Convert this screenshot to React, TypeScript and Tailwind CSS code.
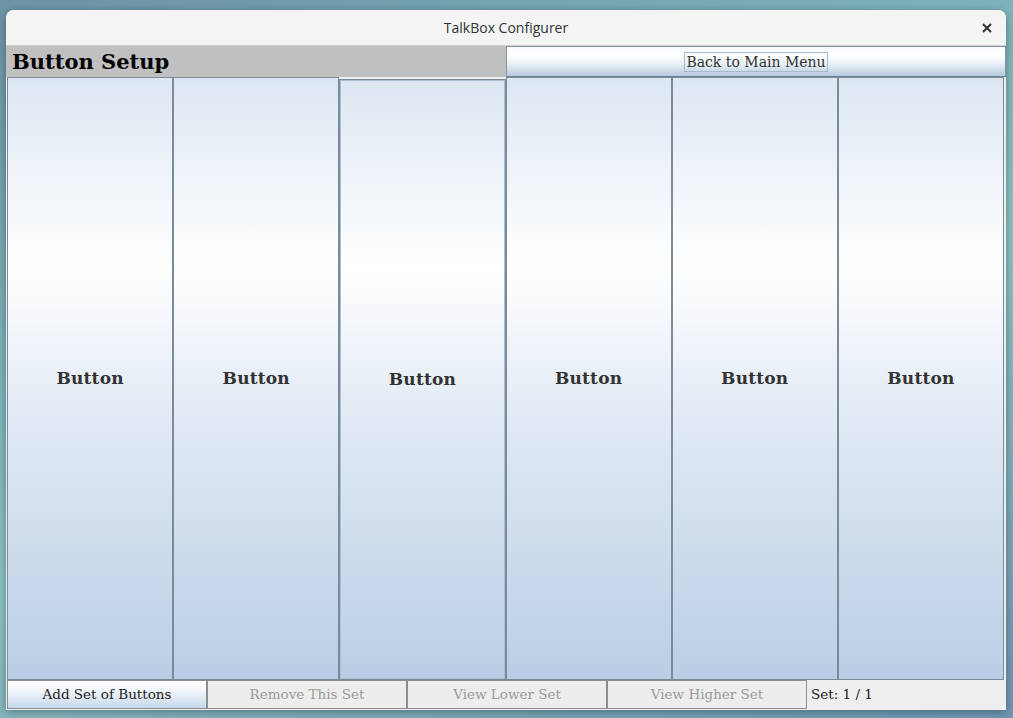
import { X } from 'lucide-react'

const serif = "font-['DejaVu_Serif','Liberation_Serif',serif]"

function BigButton({ focused }: { focused?: boolean }) {
  return (
    <div
      className={`flex flex-1 items-center justify-center border border-[#7b8b9a] bg-[linear-gradient(to_bottom,#dde7f2_0%,#fbfdfe_28%,#ffffff_31%,#e3ebf5_55%,#b9cee5_100%)] ${
        focused ? 'mt-[2px] shadow-[inset_0_0_0_1px_#a9bfd6]' : ''
      }`}
    >
      <span className={`${serif} text-[17px] font-bold tracking-[0.2px] text-[#333]`}>Button</span>
    </div>
  )
}

function BottomButton({ label, enabled }: { label: string; enabled?: boolean }) {
  return (
    <div
      className={`flex w-[200px] items-center justify-center border border-[#8e8e8e] ${
        enabled
          ? 'bg-[linear-gradient(to_bottom,#ffffff_0%,#f2f6fb_35%,#c5d7ea_100%)] text-[#222]'
          : 'bg-[#ededed] text-[#9b9b9b]'
      }`}
    >
      <span className={`${serif} text-[13.5px]`}>{label}</span>
    </div>
  )
}

export default function App() {
  return (
    <div className="h-[718px] w-[1013px] overflow-hidden bg-[linear-gradient(160deg,#6c93a6_0%,#7fb4bb_35%,#8cc2c4_55%,#6f97b3_100%)] pl-[6px] pt-[10px]">
      <div className="flex h-[700px] w-[1000px] flex-col overflow-hidden rounded-t-[8px] bg-[#eeeeee] shadow-[0_2px_8px_rgba(0,0,0,0.35)]">
        {/* title bar */}
        <div className="relative flex h-[36px] shrink-0 items-center justify-center border-b border-[#cfcfcf] bg-[#f4f4f4]">
          <span className="font-['Open_Sans','Noto_Sans',sans-serif] text-[14px] text-[#2e3436]">TalkBox Configurer</span>
          <X className="absolute right-[12px] top-[11px] h-[14px] w-[14px] text-[#2e3436]" strokeWidth={3.2} />
        </div>

        {/* header row */}
        <div className="flex h-[31px] shrink-0">
          <div className="flex w-[500px] items-end bg-[#c0c0c0] pb-[1px] pl-[6px]">
            <span className={`${serif} text-[21px] font-bold leading-[28px] text-black`}>Button Setup</span>
          </div>
          <div className="flex flex-1 items-center justify-center border border-[#8595a6] border-b-[#6f8193] bg-[linear-gradient(to_bottom,#f7fafd_0%,#ffffff_30%,#e6eef6_60%,#b5cade_100%)]">
            <span className={`${serif} border border-[#a7b9cd] px-[1px] text-[14px] leading-[18px] text-[#333]`}>Back to Main Menu</span>
          </div>
        </div>

        {/* buttons */}
        <div className="flex min-h-0 flex-1 pl-[1px] pr-[2px]">
          <BigButton />
          <BigButton />
          <BigButton focused />
          <BigButton />
          <BigButton />
          <BigButton />
        </div>

        {/* bottom row */}
        <div className="flex h-[30px] shrink-0 pl-[1px] pb-[1px]">
          <BottomButton label="Add Set of Buttons" enabled />
          <BottomButton label="Remove This Set" />
          <BottomButton label="View Lower Set" />
          <BottomButton label="View Higher Set" />
          <div className="flex flex-1 items-center pl-[4px]">
            <span className={`${serif} text-[13.5px] text-[#222]`}>Set: 1 / 1</span>
          </div>
        </div>
      </div>
    </div>
  )
}
